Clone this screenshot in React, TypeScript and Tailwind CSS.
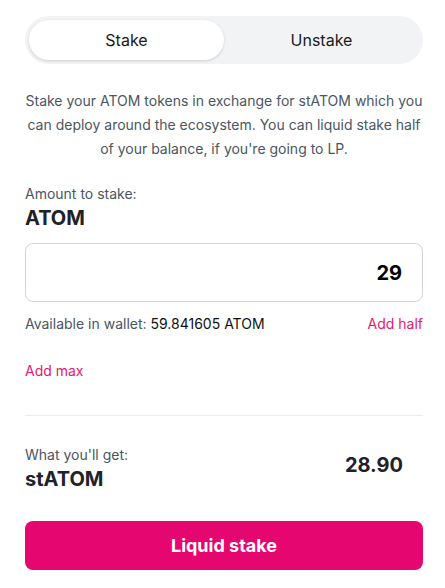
import React from "react";

export default function App() {
  return (
    <div className="min-h-screen bg-white" style={{ fontFamily: "Inter, 'Noto Sans', sans-serif" }}>
      <div className="w-[398px] ml-[25px] pt-4">
        <div className="h-12 rounded-full bg-[#f2f3f5] p-1 flex">
          <div className="flex-1 rounded-full bg-white shadow-[0_1px_3px_rgba(0,0,0,0.15)] flex items-center justify-center text-[16px] text-[#1a1a1a]">
            Stake
          </div>
          <div className="flex-1 rounded-full flex items-center justify-center text-[16px] text-[#1a1a1a]">
            Unstake
          </div>
        </div>

        <p className="mt-[25px] text-center text-[14px] leading-6 text-[#4b5563]">
          Stake your ATOM tokens in exchange for stATOM which you can deploy around the ecosystem. You can liquid stake half of your balance, if you're going to LP.
        </p>

        <div className="mt-[23px] text-[14px] leading-5 text-[#4b5563]">Amount to stake:</div>
        <div className="text-[20px] leading-7 font-bold text-[#1f2229]">ATOM</div>

        <div className="mt-[11px] h-[59px] rounded-lg border border-[#d1d5db] flex items-center justify-end pr-5">
          <span className="text-[20px] font-bold text-black">29</span>
        </div>

        <div className="mt-3 flex justify-between text-[14px] leading-5">
          <span className="text-[#4b5563]">
            Available in wallet: <span className="text-[#111]">59.841605 ATOM</span>
          </span>
          <span className="text-[#e5196f]">Add half</span>
        </div>

        <div className="mt-[27px] text-[14px] leading-5 text-[#e5196f]">Add max</div>

        <div className="mt-[34px] h-px bg-[#ebebf0]" />

        <div className="mt-[29px] flex items-center justify-between pr-5">
          <div>
            <div className="text-[14px] leading-5 text-[#4b5563]">What you'll get:</div>
            <div className="text-[20px] leading-7 font-bold text-[#1f2229]">stATOM</div>
          </div>
          <div className="text-[20px] font-bold text-[#1f2229] -mt-[9px]">28.90</div>
        </div>

        <button className="mt-[28px] w-full h-[49px] rounded-lg bg-[#e6066f] text-white text-[18px] font-bold">
          Liquid stake
        </button>
      </div>
    </div>
  );
}
